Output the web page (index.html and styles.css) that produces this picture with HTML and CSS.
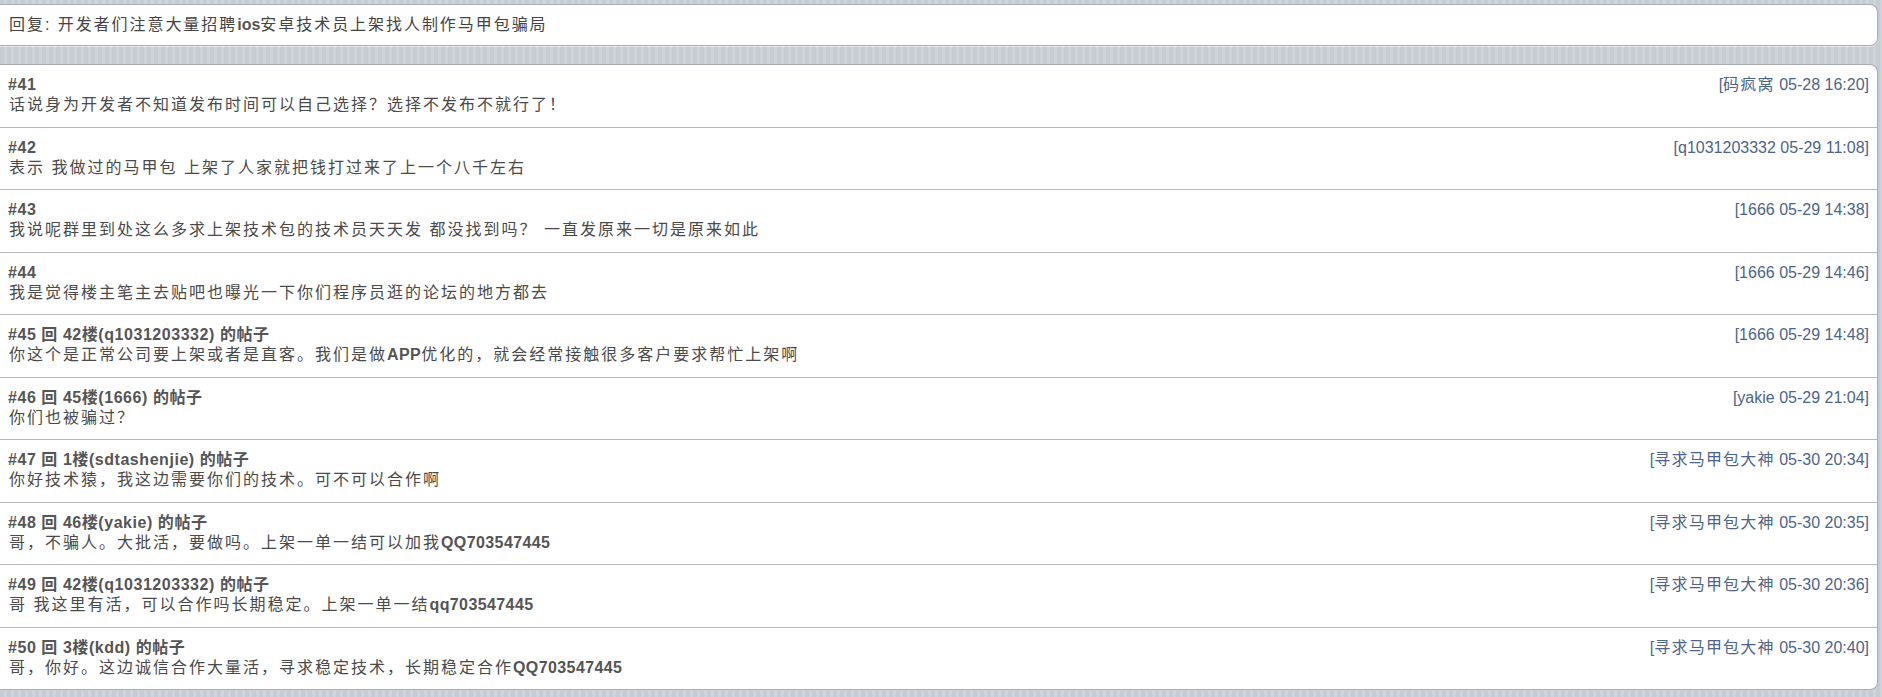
FILE: index.html
```html
<!DOCTYPE html>
<html lang="zh-CN">
<head>
    <meta charset="UTF-8">
    <meta name="viewport" content="width=device-width, initial-scale=1.0">
    <title>回复: 开发者们注意大量招聘ios安卓技术员上架找人制作马甲包骗局</title>
    <link rel="stylesheet" href="styles.css">
</head>
<body>
    <div class="topic">回复: 开发者们注意大量招聘<b>ios</b>安卓技术员上架找人制作马甲包骗局</div>

    <ul class="replies">
        <li class="reply">
            <div class="reply-head"><span class="floor">#41</span><span class="meta">[<span class="nick">码疯窝</span> 05-28 16:20]</span></div>
            <div class="reply-body">话说身为开发者不知道发布时间可以自己选择？选择不发布不就行了！</div>
        </li>
        <li class="reply">
            <div class="reply-head"><span class="floor">#42</span><span class="meta">[q1031203332 05-29 11:08]</span></div>
            <div class="reply-body">表示 我做过的马甲包 上架了人家就把钱打过来了上一个八千左右</div>
        </li>
        <li class="reply">
            <div class="reply-head"><span class="floor">#43</span><span class="meta">[1666 05-29 14:38]</span></div>
            <div class="reply-body">我说呢群里到处这么多求上架技术包的技术员天天发 都没找到吗？ 一直发原来一切是原来如此</div>
        </li>
        <li class="reply">
            <div class="reply-head"><span class="floor">#44</span><span class="meta">[1666 05-29 14:46]</span></div>
            <div class="reply-body">我是觉得楼主笔主去贴吧也曝光一下你们程序员逛的论坛的地方都去</div>
        </li>
        <li class="reply">
            <div class="reply-head"><span class="floor">#45 回 42楼(q1031203332) 的帖子</span><span class="meta">[1666 05-29 14:48]</span></div>
            <div class="reply-body">你这个是正常公司要上架或者是直客。我们是做<b>APP</b>优化的，就会经常接触很多客户要求帮忙上架啊</div>
        </li>
        <li class="reply">
            <div class="reply-head"><span class="floor">#46 回 45楼(1666) 的帖子</span><span class="meta">[yakie 05-29 21:04]</span></div>
            <div class="reply-body">你们也被骗过？</div>
        </li>
        <li class="reply">
            <div class="reply-head"><span class="floor">#47 回 1楼(sdtashenjie) 的帖子</span><span class="meta">[<span class="nick">寻求马甲包大神</span> 05-30 20:34]</span></div>
            <div class="reply-body">你好技术猿，我这边需要你们的技术。可不可以合作啊</div>
        </li>
        <li class="reply">
            <div class="reply-head"><span class="floor">#48 回 46楼(yakie) 的帖子</span><span class="meta">[<span class="nick">寻求马甲包大神</span> 05-30 20:35]</span></div>
            <div class="reply-body">哥，不骗人。大批活，要做吗。上架一单一结可以加我<b>QQ703547445</b></div>
        </li>
        <li class="reply">
            <div class="reply-head"><span class="floor">#49 回 42楼(q1031203332) 的帖子</span><span class="meta">[<span class="nick">寻求马甲包大神</span> 05-30 20:36]</span></div>
            <div class="reply-body">哥 我这里有活，可以合作吗长期稳定。上架一单一结<b>qq703547445</b></div>
        </li>
        <li class="reply">
            <div class="reply-head"><span class="floor">#50 回 3楼(kdd) 的帖子</span><span class="meta">[<span class="nick">寻求马甲包大神</span> 05-30 20:40]</span></div>
            <div class="reply-body">哥，你好。这边诚信合作大量活，寻求稳定技术，长期稳定合作<b>QQ703547445</b></div>
        </li>
    </ul>
</body>
</html>
```

FILE: styles.css
```css
body {
    margin: 0;
    padding: 4px 4px 0 0;
    font-family: "Liberation Sans", "Noto Sans CJK SC", sans-serif;
    font-size: 16px;
    line-height: 20px;
    color: #4a4a4a;
    /* pinstripe backdrop */
    background-color: #c5ccd4;
    background-image: repeating-linear-gradient(90deg, #c5ccd4 0, #c5ccd4 4px, #ced4da 4px, #ced4da 7px);
    min-height: 697px;
    box-sizing: border-box;
}
b {
    font-weight: bold;
    color: #555;
}
.topic {
    background: #fff;
    border: 1px solid #a9adb2;
    border-left: none;
    border-radius: 0 8px 8px 0;
    padding: 10px 9px;
    letter-spacing: 1.95px;
    color: #444;
    box-shadow: 0 1px 0 rgba(255, 255, 255, 0.5);
}
.topic b {
    letter-spacing: 0;
}
.replies {
    list-style: none;
    margin: 18px 0 0;
    padding: 0;
    background: #fff;
    border: 1px solid #a9adb2;
    border-left: none;
    border-radius: 0 8px 8px 0;
    overflow: hidden;
}
.reply {
    padding: 10px 8px 11.5px 8px;
    border-top: 1px solid #b9b9b9;
}
.reply:first-child {
    border-top: none;
}
.reply-head {
    display: flex;
    justify-content: space-between;
}
.floor {
    font-weight: bold;
    color: #555;
    letter-spacing: 0.55px;
}
.meta {
    color: #4c658c;
}
.nick {
    letter-spacing: 1.2px;
}
.reply-body {
    letter-spacing: 2px;
    padding-left: 1px;
}
.reply-body b {
    letter-spacing: 0.4px;
}
```
